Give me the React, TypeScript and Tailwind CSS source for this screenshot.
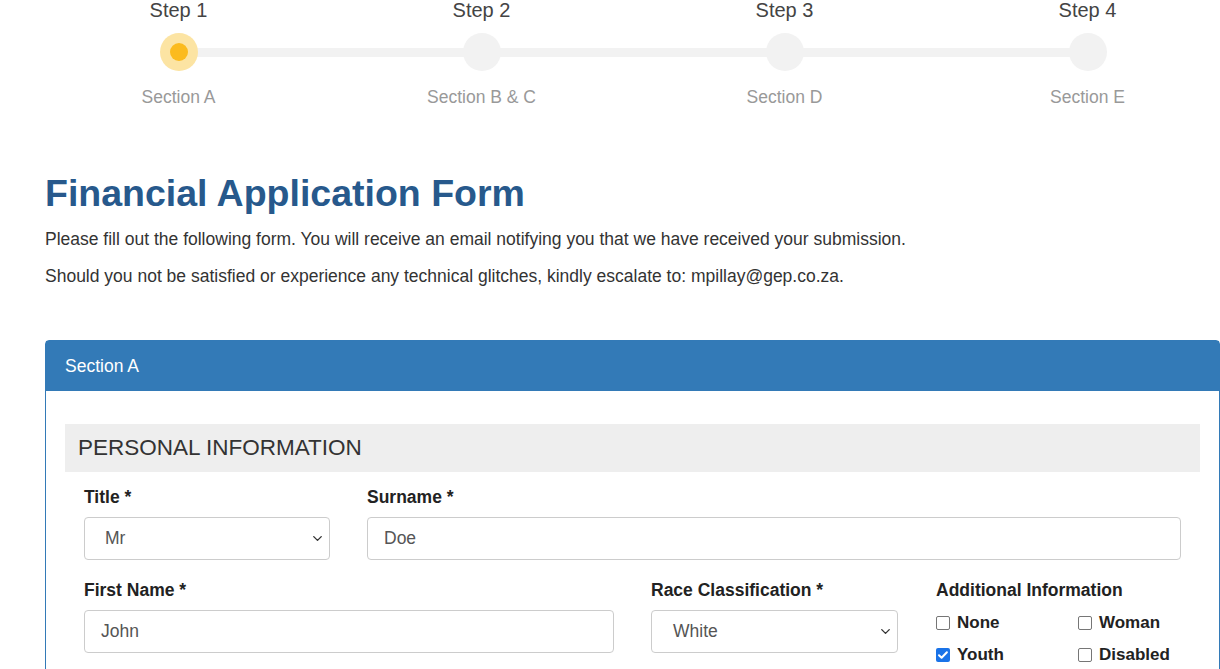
import { ChevronDown } from "lucide-react";

const steps = [
    { step: "Step 1", label: "Section A", active: true },
    { step: "Step 2", label: "Section B & C", active: false },
    { step: "Step 3", label: "Section D", active: false },
    { step: "Step 4", label: "Section E", active: false },
];

const Stepper = () => (
    <div className="relative ml-[27px] grid grid-cols-[repeat(4,303px)]">
        {/* track behind the dots */}
        <div className="absolute left-[151px] top-[48px] h-[9px] w-[909px] bg-[#f2f2f2]" />
        {steps.map((s) => (
            <div key={s.step} className="relative flex flex-col items-center">
                <div className="h-[22px] text-[20px] leading-[20px] text-[#444]">{s.step}</div>
                <div
                    className={
                        "mt-[11px] flex h-[38px] w-[38px] items-center justify-center rounded-full " +
                        (s.active ? "bg-[#fce4a3]" : "bg-[#f2f2f2]")
                    }
                >
                    {s.active && <div className="h-[18px] w-[18px] rounded-full bg-[#fbbb1e]" />}
                </div>
                <div className="mt-[16px] text-[17.5px] leading-[20px] text-[#999]">{s.label}</div>
            </div>
        ))}
    </div>
);

const Select = ({ value, className, pad }: { value: string; className: string; pad: string }) => (
    <div
        className={
            "flex h-[43px] items-center justify-between rounded-[4px] border border-[#ccc] bg-white pr-[4px] text-[17.5px] text-[#555] " +
            pad +
            " " +
            className
        }
    >
        <span>{value}</span>
        <ChevronDown size={15} strokeWidth={2.2} className="text-[#333]" />
    </div>
);

const Input = ({ value, className }: { value: string; className: string }) => (
    <div
        className={
            "flex h-[43px] items-center rounded-[4px] border border-[#ccc] bg-white pl-[16px] text-[17.5px] text-[#555] " +
            className
        }
    >
        {value}
    </div>
);

const Check = ({ label, checked }: { label: string; checked?: boolean }) => (
    <label className="flex h-[20px] items-center gap-[7px] text-[17px] font-bold leading-[20px] text-[#222]">
        {checked ? (
            <span className="flex h-[14px] w-[14px] items-center justify-center rounded-[2px] bg-[#1a73e8]">
                <svg viewBox="0 0 12 12" className="h-[12px] w-[12px]">
                    <path d="M2 6.3l2.6 2.5 5.3-5.6" fill="none" stroke="white" strokeWidth="2" strokeLinecap="round" strokeLinejoin="round" />
                </svg>
            </span>
        ) : (
            <span className="h-[14px] w-[14px] rounded-[2px] border border-[#767676] bg-white" />
        )}
        {label}
    </label>
);

const Label = ({ children }: { children: string }) => (
    <div className="text-[17.5px] font-bold leading-[20px] text-[#222]">{children}</div>
);

const App = () => {
    return (
        <div className="h-[669px] w-[1220px] overflow-hidden bg-white font-['Liberation_Sans',Arial,sans-serif] text-[#333]">
            <Stepper />

            <div className="pl-[45px]">
                <h1 className="mt-[64px] text-[37.5px] font-bold leading-[44px] text-[#27598c]">
                    Financial Application Form
                </h1>
                <p className="mt-[14px] text-[17.5px] leading-[20px] text-[#333]">
                    Please fill out the following form. You will receive an email notifying you that we have received your submission.
                </p>
                <p className="mt-[17px] text-[17.5px] leading-[20px] text-[#333]">
                    Should you not be satisfied or experience any technical glitches, kindly escalate to: mpillay@gep.co.za.
                </p>

                <div className="mt-[54px] w-[1175px] rounded-t-[4px] border border-[#337ab7]">
                    <div className="flex h-[50px] items-center bg-[#337ab7] pl-[19px] text-[17.5px] text-white">
                        Section A
                    </div>
                    <div className="px-[19px] pt-[33px] pb-[60px]">
                        <div className="flex h-[48px] items-center bg-[#eee] pl-[13px] text-[22.5px] text-[#333]">
                            PERSONAL INFORMATION
                        </div>

                        <div className="px-[19px]">
                            <div className="mt-[15px] flex gap-[37px]">
                                <div className="w-[246px]">
                                    <Label>Title *</Label>
                                    <Select value="Mr" pad="pl-[20px]" className="mt-[10px] w-[246px]" />
                                </div>
                                <div className="flex-1">
                                    <Label>Surname *</Label>
                                    <Input value="Doe" className="mt-[10px] w-full" />
                                </div>
                            </div>

                            <div className="mt-[20px] flex gap-[37px]">
                                <div className="w-[530px]">
                                    <Label>First Name *</Label>
                                    <Input value="John" className="mt-[10px] w-[530px]" />
                                </div>
                                <div className="w-[247px]">
                                    <Label>Race Classification *</Label>
                                    <Select value="White" pad="pl-[21px]" className="mt-[10px] w-[247px]" />
                                </div>
                                <div className="flex-1 pl-[1px]">
                                    <Label>Additional Information</Label>
                                    <div className="mt-[13px] grid grid-cols-[142px_1fr] gap-y-[12px]">
                                        <Check label="None" />
                                        <Check label="Woman" />
                                        <Check label="Youth" checked />
                                        <Check label="Disabled" />
                                    </div>
                                </div>
                            </div>
                        </div>
                    </div>
                </div>
            </div>
        </div>
    );
};

export default App;
